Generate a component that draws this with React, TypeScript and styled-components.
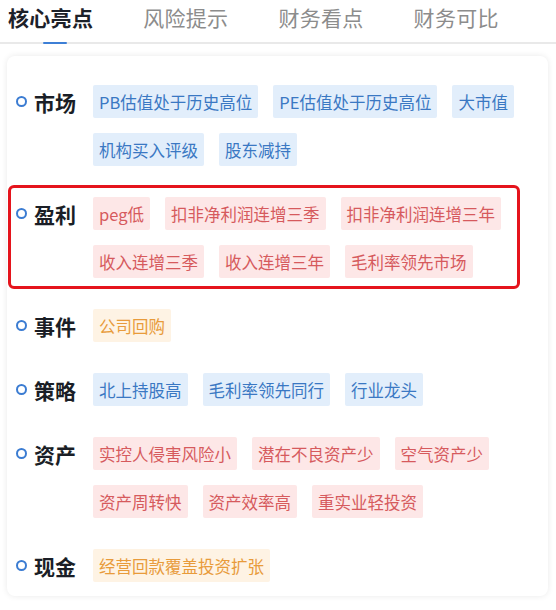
import styled, { createGlobalStyle, css } from 'styled-components';

const GlobalStyle = createGlobalStyle`
  html, body {
    margin: 0;
    padding: 0;
    background: #fff;
  }

  body {
    font-family: "Noto Sans CJK SC", "Noto Sans", sans-serif;
  }
`;

const Page = styled.div`
  width: 556px;
  height: 610px;
  overflow: hidden;
  background: #fff;
`;

const TabBar = styled.div`
  display: flex;
  gap: 50px;
  height: 44px;
  padding-left: 8px;
  border-bottom: 2px solid #e9e9e9;
  box-sizing: border-box;
`;

const Tab = styled.div<{ $active?: boolean }>`
  position: relative;
  font-size: 21px;
  line-height: 1;
  padding-top: 7px;
  letter-spacing: 0.3px;
  color: ${({ $active }) => ($active ? '#1d2129' : '#8c8c8c')};
  font-weight: ${({ $active }) => ($active ? 700 : 400)};

  ${({ $active }) =>
    $active &&
    css`
      &::after {
        content: '';
        position: absolute;
        left: 35px;
        bottom: -2px;
        width: 24px;
        height: 2px;
        border-radius: 1px;
        background: #3d7fd6;
      }
    `}
`;

const Card = styled.div`
  margin: 12px 8px 0 7px;
  padding: 29px 20px 14px 9px;
  border-radius: 8px;
  background: #fff;
  box-shadow: 0 0 6px rgba(0, 0, 0, 0.09);
  display: flex;
  flex-direction: column;
  gap: 31px;
`;

const Group = styled.div<{ $marked?: boolean }>`
  position: relative;
  display: flex;
  align-items: flex-start;

  ${({ $marked }) =>
    $marked &&
    css`
      &::after {
        content: '';
        position: absolute;
        left: -8px;
        right: 8px;
        top: -12px;
        bottom: -11px;
        border: 3px solid #e5141c;
        border-radius: 6px;
        pointer-events: none;
      }
    `}
`;

const Label = styled.div`
  width: 77px;
  flex-shrink: 0;
  height: 33px;
  display: flex;
  align-items: center;
  gap: 7px;
  font-size: 21px;
  font-weight: 700;
  color: #1a1e26;
`;

const Dot = styled.span`
  width: 11px;
  height: 11px;
  box-sizing: border-box;
  border: 2px solid #3b7cd2;
  border-radius: 50%;
`;

const Tags = styled.div`
  flex: 1;
  display: flex;
  flex-wrap: wrap;
  gap: 15px 15px;
`;

type Tone = 'blue' | 'red' | 'orange';

const tones: Record<Tone, { bg: string; fg: string }> = {
  blue: { bg: '#e2eefb', fg: '#3a78c3' },
  red: { bg: '#fde7e7', fg: '#d65a5d' },
  orange: { bg: '#fef3e4', fg: '#e89b3b' },
};

const Tag = styled.span<{ $tone: Tone }>`
  height: 33px;
  padding: 0 6px;
  display: inline-flex;
  align-items: center;
  border-radius: 2px;
  font-size: 16.5px;
  background: ${({ $tone }) => tones[$tone].bg};
  color: ${({ $tone }) => tones[$tone].fg};
`;

const groups: { label: string; tone: Tone; tags: string[]; marked?: boolean }[] = [
  {
    label: '市场',
    tone: 'blue',
    tags: ['PB估值处于历史高位', 'PE估值处于历史高位', '大市值', '机构买入评级', '股东减持'],
  },
  {
    label: '盈利',
    tone: 'red',
    marked: true,
    tags: ['peg低', '扣非净利润连增三季', '扣非净利润连增三年', '收入连增三季', '收入连增三年', '毛利率领先市场'],
  },
  { label: '事件', tone: 'orange', tags: ['公司回购'] },
  { label: '策略', tone: 'blue', tags: ['北上持股高', '毛利率领先同行', '行业龙头'] },
  {
    label: '资产',
    tone: 'red',
    tags: ['实控人侵害风险小', '潜在不良资产少', '空气资产少', '资产周转快', '资产效率高', '重实业轻投资'],
  },
  { label: '现金', tone: 'orange', tags: ['经营回款覆盖投资扩张'] },
];

const tabs = ['核心亮点', '风险提示', '财务看点', '财务可比'];

export default function App() {
  return (
    <Page>
      <GlobalStyle />
      <TabBar>
        {tabs.map((t, i) => (
          <Tab key={t} $active={i === 0}>
            {t}
          </Tab>
        ))}
      </TabBar>
      <Card>
        {groups.map((g) => (
          <Group key={g.label} $marked={g.marked}>
            <Label>
              <Dot />
              {g.label}
            </Label>
            <Tags>
              {g.tags.map((tag) => (
                <Tag key={tag} $tone={g.tone}>
                  {tag}
                </Tag>
              ))}
            </Tags>
          </Group>
        ))}
      </Card>
    </Page>
  );
}
